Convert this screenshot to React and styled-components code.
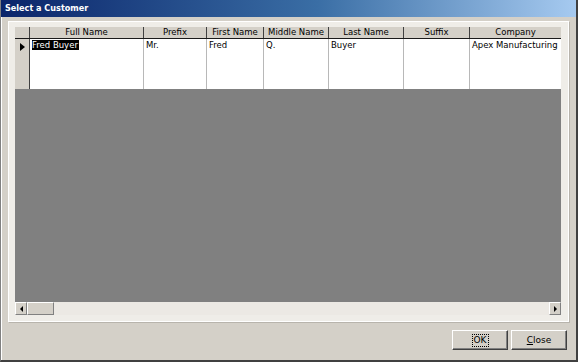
import styled, { createGlobalStyle } from "styled-components";

const GlobalStyle = createGlobalStyle`
  html, body {
    margin: 0;
    padding: 0;
    background: #d4d0c8;
  }
  * {
    box-sizing: border-box;
  }
`;

const columns = [
  { key: "fullName", label: "Full Name", width: 114 },
  { key: "prefix", label: "Prefix", width: 63 },
  { key: "firstName", label: "First Name", width: 57 },
  { key: "middleName", label: "Middle Name", width: 65 },
  { key: "lastName", label: "Last Name", width: 75 },
  { key: "suffix", label: "Suffix", width: 66 },
  { key: "company", label: "Company", width: 91 },
];

const rows = [
  {
    fullName: "Fred Buyer",
    prefix: "Mr.",
    firstName: "Fred",
    middleName: "Q.",
    lastName: "Buyer",
    suffix: "",
    company: "Apex Manufacturing",
  },
];

const template = `15px ${columns.map((c) => `${c.width}px`).join(" ")}`;

const App = () => (
  <>
    <GlobalStyle />
    <Window>
      <TitleBar>Select a Customer</TitleBar>
      <Body>
        <Panel>
          <Grid>
            <HeaderRow>
              <Corner />
              {columns.map((c) => (
                <HeaderCell key={c.key}>{c.label}</HeaderCell>
              ))}
            </HeaderRow>
            {rows.map((row, i) => (
              <DataRow key={i}>
                <RowSelector>
                  <Pointer />
                </RowSelector>
                {columns.map((c, j) => (
                  <Cell key={c.key}>
                    {j === 0 ? <Selected>{row[c.key]}</Selected> : row[c.key]}
                  </Cell>
                ))}
              </DataRow>
            ))}
            <EmptyArea />
            <ScrollBar>
              <ArrowButton>
                <ArrowLeft />
              </ArrowButton>
              <Thumb />
              <Track />
              <ArrowButton>
                <ArrowRight />
              </ArrowButton>
            </ScrollBar>
          </Grid>
        </Panel>
        <ButtonBar>
          <Button>
            <Focus>OK</Focus>
          </Button>
          <Button>
            <u>C</u>lose
          </Button>
        </ButtonBar>
      </Body>
    </Window>
  </>
);

export default App;

const Window = styled.div`
  width: 578px;
  height: 362px;
  display: flex;
  flex-direction: column;
  background: #d4d0c8;
  border-left: 1px solid #808080;
  border-right: 2px solid #404040;
  border-bottom: 2px solid #404040;
  box-shadow: inset 1px 0 0 #ffffff;
  font-family: "DejaVu Sans", Verdana, sans-serif;
  font-size: 8.5px;
  color: #000;
`;

const TitleBar = styled.div`
  height: 17px;
  flex: none;
  padding: 2px 0 0 4px;
  background: linear-gradient(to right, #0a246a 0%, #3a6ea5 55%, #a6caf0 100%);
  color: #fff;
  font-family: "DejaVu Sans Condensed", "DejaVu Sans", sans-serif;
  font-weight: bold;
  font-size: 9px;
  line-height: 13px;
`;

const Body = styled.div`
  flex: 1;
  display: flex;
  flex-direction: column;
  padding: 4px 7px 0 7px;
`;

const Panel = styled.div`
  height: 301px;
  padding: 5px 6px 6px 6px;
  background: #efede8;
  border: 1px solid #ffffff;
  box-shadow: 1px 1px 0 #b8b4ac;
`;

const Grid = styled.div`
  width: 546px;
  height: 288px;
  display: flex;
  flex-direction: column;
  background: #808080;
`;

const HeaderRow = styled.div`
  display: grid;
  grid-template-columns: ${template};
  height: 12px;
  flex: none;
  background: #d4d0c8;
  border-bottom: 1px solid #1a1a1a;
`;

const Corner = styled.div`
  border-right: 1px solid #404040;
`;

const HeaderCell = styled.div`
  text-align: center;
  line-height: 11px;
  white-space: nowrap;
  overflow: hidden;
  border-right: 1px solid #404040;
  &:last-child {
    border-right: none;
  }
`;

const DataRow = styled.div`
  display: grid;
  grid-template-columns: ${template};
  height: 50px;
  flex: none;
  background: #fff;
`;

const RowSelector = styled.div`
  background: #d4d0c8;
  border-right: 1px solid #404040;
  padding: 4px 0 0 5px;
`;

const Pointer = styled.div`
  width: 0;
  height: 0;
  border-top: 4px solid transparent;
  border-bottom: 4px solid transparent;
  border-left: 5px solid #000;
`;

const Cell = styled.div`
  padding: 1px 2px;
  line-height: 10px;
  white-space: nowrap;
  overflow: hidden;
  border-right: 1px solid #b8b8b8;
  &:last-child {
    border-right: none;
  }
`;

const Selected = styled.span`
  background: #000;
  color: #fff;
  padding: 0 1px 0 0;
`;

const EmptyArea = styled.div`
  flex: 1;
  background: #808080;
`;

const ScrollBar = styled.div`
  height: 13px;
  flex: none;
  display: flex;
  background: #ece9e4;
`;

const ArrowButton = styled.div`
  width: 12px;
  height: 13px;
  background: #d4d0c8;
  border: 1px solid;
  border-color: #fff #808080 #808080 #fff;
  display: flex;
  align-items: center;
  justify-content: center;
`;

const ArrowLeft = styled.div`
  border-top: 3px solid transparent;
  border-bottom: 3px solid transparent;
  border-right: 3px solid #000;
`;

const ArrowRight = styled.div`
  border-top: 3px solid transparent;
  border-bottom: 3px solid transparent;
  border-left: 3px solid #000;
`;

const Thumb = styled.div`
  width: 27px;
  background: #d4d0c8;
  border: 1px solid;
  border-color: #fff #808080 #808080 #fff;
`;

const Track = styled.div`
  flex: 1;
`;

const ButtonBar = styled.div`
  display: flex;
  justify-content: flex-end;
  gap: 3px;
  padding: 8px 2px 0 0;
`;

const Button = styled.div`
  width: 56px;
  height: 20px;
  display: flex;
  align-items: center;
  justify-content: center;
  background: #d4d0c8;
  border: 1px solid;
  border-color: #fff #404040 #404040 #fff;
  box-shadow: inset -1px -1px 0 #808080;
  font-size: 9px;
`;

const Focus = styled.span`
  outline: 1px dotted #000;
  padding: 0 1px;
  line-height: 11px;
`;
